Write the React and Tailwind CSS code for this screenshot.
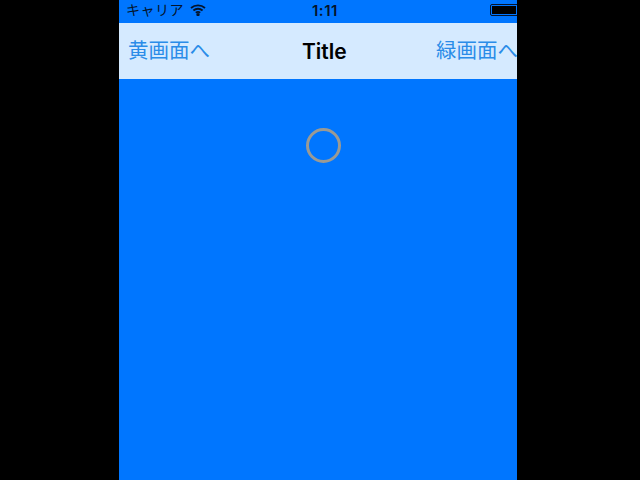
export default function App() {
  return (
    <div className="h-[480px] w-[640px] bg-black flex pl-[119px] overflow-hidden" style={{ fontFamily: '"Inter", "Noto Sans CJK JP", sans-serif' }}>
      <div className="w-[398px] h-full flex flex-col bg-[#0076ff] overflow-hidden">

        {/* Status bar */}
        <div className="h-[23px] shrink-0 relative flex items-center pl-[7px] text-[14px] text-[#04142c]">
          <span className="leading-none tracking-[0.5px] -mt-[3px]">キャリア</span>
          <svg className="ml-[6px] -mt-[3px]" width="16" height="12" viewBox="0 0 16 12" fill="none" stroke="#04142c" strokeWidth="1.8">
            <path d="M1 4C5 .4 11 .4 15 4" />
            <path d="M3.4 6.5C6 4.2 10 4.2 12.6 6.5" />
            <path d="M5.8 8.8C7 7.8 9 7.8 10.2 8.8" />
            <circle cx="8" cy="10.6" r="0.8" fill="#04142c" />
          </svg>
          <span className="absolute left-[193px] top-[3px] text-[15px] font-semibold leading-none tracking-[0.5px]">1:11</span>
          <div className="absolute left-[371px] top-[4px] w-[28px] h-[12px] border border-[#04142c] rounded-l-[2px] p-px">
            <div className="w-full h-full bg-black" />
          </div>
        </div>

        {/* Nav bar */}
        <div className="h-[56px] shrink-0 relative flex items-center justify-between bg-[#d5eaff] pl-[9px] text-[20.5px] text-[#2a8ce8] whitespace-nowrap">
          <span>黄画面へ</span>
          <span className="absolute left-[183px] top-[13px] text-[21px] font-semibold text-black">Title</span>
          <span className="-mr-[1px]">緑画面へ</span>
        </div>

        {/* Content */}
        <div className="flex-1 flex justify-center pt-[49px] pl-[10px]">
          <div className="w-[35px] h-[35px] rounded-full border-[3px] border-[#9a9a94]" />
        </div>
      </div>
    </div>
  )
}
